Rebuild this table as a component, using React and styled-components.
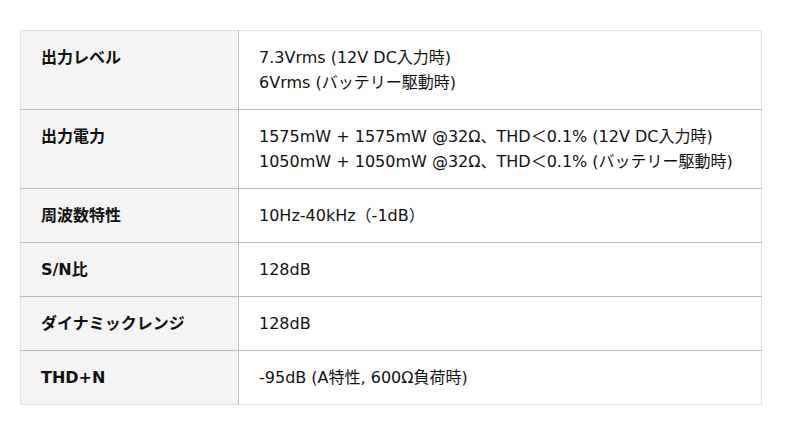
import React from "react";
import styled, { createGlobalStyle } from "styled-components";

const GlobalStyle = createGlobalStyle`
  body {
    margin: 0;
    background: #fff;
  }
`;

const specs = [
  { label: "出力レベル", lines: ["7.3Vrms (12V DC入力時)", "6Vrms (バッテリー駆動時)"] },
  {
    label: "出力電力",
    lines: [
      "1575mW + 1575mW @32Ω、THD＜0.1% (12V DC入力時)",
      "1050mW + 1050mW @32Ω、THD＜0.1% (バッテリー駆動時)",
    ],
  },
  { label: "周波数特性", lines: ["10Hz-40kHz（-1dB）"] },
  { label: "S/N比", lines: ["128dB"] },
  { label: "ダイナミックレンジ", lines: ["128dB"] },
  { label: "THD+N", lines: ["-95dB (A特性, 600Ω負荷時)"] },
];

const SpecTable = () => {
  return (
    <Wrapper>
      <table>
        <tbody>
          {specs.map((spec) => {
            const { label, lines } = spec;
            return (
              <tr key={label}>
                <th>{label}</th>
                <td>
                  {lines.map((line) => (
                    <div key={line}>{line}</div>
                  ))}
                </td>
              </tr>
            );
          })}
        </tbody>
      </table>
    </Wrapper>
  );
};

const Wrapper = styled.section`
  padding: 30px 38px 30px 20px;
  table {
    width: 742px;
    border-collapse: collapse;
    border: 1px solid #e2e2e2;
    font-family: "DejaVu Sans", "Noto Sans CJK JP", sans-serif;
    font-size: 16px;
    line-height: 25px;
    color: #111;
  }
  tr + tr {
    border-top: 1px solid #bdbdbd;
  }
  th {
    width: 177px;
    background: #f4f4f4;
    text-align: left;
    vertical-align: top;
    font-weight: 700;
    padding: 14px 20px;
    border-right: 1px solid #bdbdbd;
  }
  td {
    vertical-align: top;
    padding: 14px 20px;
  }
`;

export default function App() {
  return (
    <>
      <GlobalStyle />
      <SpecTable />
    </>
  );
}
